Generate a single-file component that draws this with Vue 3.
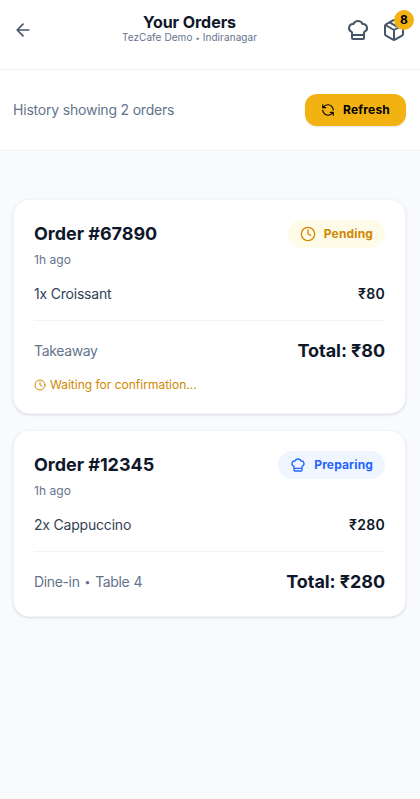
<script setup>
const orders = [
  { id: '67890', status: 'Pending', tone: 'pending', ago: '1h ago', item: '1x Croissant', total: '₹80', place: ['Takeaway'], note: 'Waiting for confirmation...' },
  { id: '12345', status: 'Preparing', tone: 'preparing', ago: '1h ago', item: '2x Cappuccino', total: '₹280', place: ['Dine-in', 'Table 4'], note: '' },
]
const hat = 'M17 21a1 1 0 0 0 1-1v-5.35c0-.457.316-.844.727-1.041a4 4 0 0 0-2.134-7.589 5 5 0 0 0-9.186 0 4 4 0 0 0-2.134 7.588c.411.198.727.584.727 1.041V20a1 1 0 0 0 1 1ZM6 17h12'
</script>

<template>
  <div class="page">
    <header class="header">
      <svg class="icon back" viewBox="0 0 24 24"><path d="m12 19-7-7 7-7M19 12H5" /></svg>
      <div class="heading">
        <h1>Your Orders</h1>
        <p>TezCafe Demo <span class="dot">•</span> Indiranagar</p>
      </div>
      <div class="actions">
        <svg class="icon nav" viewBox="0 0 24 24"><path :d="hat" /></svg>
        <div class="box">
          <svg class="icon nav" viewBox="0 0 24 24">
            <path d="M11 21.73a2 2 0 0 0 2 0l7-4A2 2 0 0 0 21 16V8a2 2 0 0 0-1-1.73l-7-4a2 2 0 0 0-2 0l-7 4A2 2 0 0 0 3 8v8a2 2 0 0 0 1 1.73zM12 22V12M3.29 7 12 12l8.71-5M7.5 4.27l9 5.15" />
          </svg>
          <span class="badge">8</span>
        </div>
      </div>
    </header>

    <section class="toolbar">
      <span class="summary">History showing 2 orders</span>
      <button class="refresh">
        <svg class="icon" viewBox="0 0 24 24">
          <path d="M21 12a9 9 0 0 0-9-9 9.75 9.75 0 0 0-6.74 2.74L3 8M3 3v5h5M3 12a9 9 0 0 0 9 9 9.75 9.75 0 0 0 6.74-2.74L21 16M16 16h5v5" />
        </svg>
        <span>Refresh</span>
      </button>
    </section>

    <main class="list">
      <article v-for="o in orders" :key="o.id" class="card">
        <div class="row top">
          <h2>Order #{{ o.id }}</h2>
          <span class="pill" :class="o.tone">
            <svg class="icon" viewBox="0 0 24 24">
              <path v-if="o.tone === 'preparing'" :d="hat" />
              <template v-else><circle cx="12" cy="12" r="10" /><path d="M12 6v6l4 2" /></template>
            </svg>
            <span class="label">{{ o.status }}</span>
          </span>
        </div>
        <p class="ago">{{ o.ago }}</p>
        <div class="row item">
          <span>{{ o.item }}</span>
          <span class="price">{{ o.total }}</span>
        </div>
        <div class="row foot">
          <span class="place">{{ o.place[0] }}<template v-if="o.place[1]">&nbsp;<span class="dot wide">•</span> {{ o.place[1] }}</template></span>
          <span class="total">Total: {{ o.total }}</span>
        </div>
        <p v-if="o.note" class="note">
          <svg class="icon" viewBox="0 0 24 24"><circle cx="12" cy="12" r="10" /><path d="M12 6v6l4 2" /></svg>
          <span class="label">{{ o.note }}</span>
        </p>
      </article>
    </main>
  </div>
</template>

<style>
body { background: #f8fafc; }
</style>

<style scoped>
.page { min-height: 799px; background: #f8fafc; color: #0f172a; font-family: Inter, sans-serif; }
.page, .page * { box-sizing: border-box; }
h1, h2, p { margin: 0; }
.icon { display: block; flex: none; fill: none; stroke: currentColor; stroke-width: 2; stroke-linecap: round; stroke-linejoin: round; }
.dot { font-size: 0.75em; line-height: 1; vertical-align: 0.06em; }
.dot.wide { margin: 0 1px; }
.header { height: 70px; padding: 0 14px 9px 13px; display: grid; grid-template-columns: 40px 1fr 80px; align-items: center; background: #fff; border-bottom: 1px solid #eef0f3; }
.back { width: 20px; height: 20px; color: #475569; }
.heading { padding-bottom: 4px; text-align: center; }
h1 { font-size: 16px; line-height: 18px; font-weight: 700; letter-spacing: -0.05px; }
.heading p { font-size: 10px; line-height: 12px; letter-spacing: 0.08px; color: #64748b; white-space: nowrap; }
.actions { display: flex; justify-content: flex-end; gap: 12px; color: #475569; }
.nav { width: 24px; height: 24px; }
.box { position: relative; }
.badge { position: absolute; top: -8px; right: -8px; width: 20px; height: 20px; border-radius: 50%; background: #f2b211; color: #000; font-size: 12px; line-height: 20px; font-weight: 700; text-align: center; }
.toolbar { height: 81px; padding: 0 14px 0 13px; display: flex; align-items: center; justify-content: space-between; background: #fff; border-bottom: 1px solid #eef1f5; }
.summary { padding-bottom: 2px; font-size: 14px; letter-spacing: -0.2px; color: #64748b; }
.refresh { width: 101px; height: 32px; padding: 0; border: 0; border-radius: 12px; display: flex; align-items: center; justify-content: center; gap: 8px; background: #f2b211; color: #000; font: 700 12px/16px Inter, sans-serif; letter-spacing: 0.2px; box-shadow: 0 1px 2px rgba(0, 0, 0, .1); }
.refresh .icon { width: 14px; height: 14px; }
.list { padding: 48px 14px 0 13px; display: flex; flex-direction: column; gap: 16px; }
.card { padding: 20px; border: 1px solid #f1f5f9; border-radius: 16px; background: #fff; box-shadow: 0 1px 3px rgba(15, 23, 42, .1), 0 1px 2px -1px rgba(15, 23, 42, .1); }
.row { display: flex; align-items: center; justify-content: space-between; }
.top { height: 28px; }
h2 { font-size: 18px; line-height: 28px; font-weight: 700; letter-spacing: -0.03px; }
.pill { height: 28px; padding: 0 12px; border-radius: 14px; display: flex; align-items: center; gap: 8px; font-size: 12px; font-weight: 700; letter-spacing: 0.15px; }
.pill .icon { width: 16px; height: 16px; }
.label { padding-bottom: 2px; }
.pending { color: #d08700; background: #fefce8; }
.preparing { color: #2563ff; background: #eff6ff; }
.ago { margin-top: 4px; font-size: 12px; line-height: 16px; letter-spacing: 0.05px; color: #64748b; }
.item { height: 20px; margin-top: 16px; padding-bottom: 2px; font-size: 14px; letter-spacing: -0.2px; color: #334155; }
.price { font-weight: 600; letter-spacing: 0.3px; color: #0f172a; }
.foot { height: 45px; margin-top: 16px; padding-top: 15px; border-top: 1px solid #f1f3f6; }
.place { font-size: 14px; letter-spacing: -0.35px; word-spacing: 0.4px; color: #64748b; }
.total { font-size: 18px; line-height: 28px; font-weight: 700; letter-spacing: -0.06px; }
.note { display: flex; align-items: center; gap: 4px; height: 16px; margin-top: 12px; font-size: 12px; color: #d08700; }
.note .icon { width: 12px; height: 12px; }
</style>
